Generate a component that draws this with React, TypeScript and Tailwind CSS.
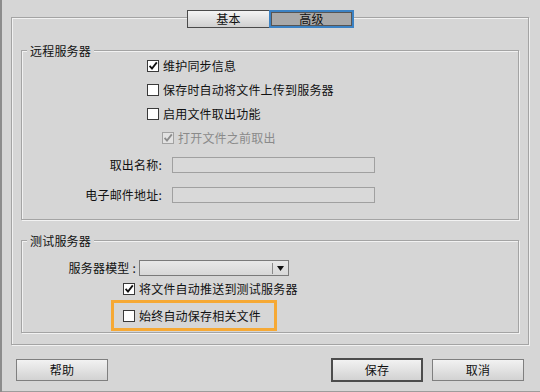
import React from 'react';

type BoxProps = { checked?: boolean; disabled?: boolean };

const Box: React.FC<BoxProps> = ({ checked, disabled }) => (
  <span
    className={
      disabled
        ? 'flex h-[12px] w-[12px] shrink-0 items-center justify-center border border-[#a2a2a2] bg-[#e2e2e2]'
        : 'flex h-[12px] w-[12px] shrink-0 items-center justify-center border border-[#3a3a3a] bg-white'
    }
  >
    {checked && (
      <svg viewBox="0 0 10 10" className="h-[10px] w-[10px]">
        <path
          d="M1.6 4.8 L4 7.6 L8.8 1.4"
          fill="none"
          stroke={disabled ? '#8c8c8c' : '#111'}
          strokeWidth="1.8"
        />
      </svg>
    )}
  </span>
);

type CheckProps = BoxProps & { label: string; className?: string };

const Check: React.FC<CheckProps> = ({ label, checked, disabled, className }) => (
  <div className={`flex items-center gap-[4px] ${className ?? ''}`}>
    <Box checked={checked} disabled={disabled} />
    <span className={disabled ? 'leading-[14px] text-[#8a8a8a]' : 'leading-[14px] text-[#111]'}>{label}</span>
  </div>
);

const Group: React.FC<{ title: string; className: string; children: React.ReactNode }> = ({
  title,
  className,
  children,
}) => (
  <div
    className={`relative border border-[#a4a4a4] shadow-[1px_1px_0_#f2f2f2,inset_1px_1px_0_#f2f2f2] ${className}`}
  >
    <span className="absolute -top-[8px] left-[5px] bg-[#d6d6d6] px-[3px] leading-[16px] text-[#111]">
      {title}
    </span>
    {children}
  </div>
);

const Field: React.FC<{ label: string }> = ({ label }) => (
  <div className="flex items-center">
    <span className="w-[140px] text-right leading-[14px] text-[#111]">{label}</span>
    <div className="ml-[10px] h-[16px] w-[203px] border border-[#a0a0a0] bg-[#d9d9d9]" />
  </div>
);

const Button: React.FC<{ label: string; primary?: boolean }> = ({ label, primary }) => (
  <div
    className={
      primary
        ? 'flex h-[24px] w-[92px] items-center justify-center border-2 border-[#4c4c4c] bg-linear-to-b from-[#f2f2f2] to-[#d2d2d2] text-[#111]'
        : 'flex h-[22px] w-[92px] items-center justify-center border border-[#7f7f7f] bg-linear-to-b from-[#f2f2f2] to-[#d2d2d2] text-[#111]'
    }
  >
    {label}
  </div>
);

export default function App() {
  return (
    <div className="flex h-[392px] w-[540px] flex-col bg-[#d6d6d6] font-['Noto_Sans_CJK_SC',sans-serif] text-[12px] tracking-[0.2px] shadow-[inset_2px_0_0_#8c8c8c,inset_0_-1px_0_#9c9c9c]">
      {/* tabs */}
      <div className="relative z-10 mt-[10px] flex justify-center pl-[1px]">
        <div className="flex h-[18px] w-[83px] items-center justify-center border border-[#4a4a4a] bg-linear-to-b from-[#f4f4f4] to-[#d0d0d0] text-[#111]">
          基本
        </div>
        <div className="-ml-px flex h-[18px] w-[85px] items-center justify-center border-2 border-[#3b82c4] bg-[#a9a9a9] text-[#111] shadow-[inset_0_0_0_1px_#555]">
          高级
        </div>
      </div>

      {/* panel */}
      <div className="-mt-[11px] ml-[11px] flex h-[328px] w-[518px] flex-col border border-[#a4a4a4] px-[9px] pt-[32px] shadow-[1px_1px_0_#f2f2f2,inset_1px_1px_0_#f2f2f2]">
        <Group title="远程服务器" className="h-[170px] pt-[3px]">
          <Check className="ml-[125px] h-[24px]" checked label="维护同步信息" />
          <Check className="ml-[125px] h-[24px]" label="保存时自动将文件上传到服务器" />
          <Check className="ml-[125px] h-[24px]" label="启用文件取出功能" />
          <Check className="ml-[140px] h-[24px]" checked disabled label="打开文件之前取出" />
          <div className="mt-[7px]">
            <Field label="取出名称:" />
          </div>
          <div className="mt-[14px]">
            <Field label="电子邮件地址:" />
          </div>
        </Group>

        <Group title="测试服务器" className="mt-[20px] h-[93px] pt-[19px]">
          <div className="flex items-center">
            <span className="w-[114px] text-right leading-[14px] text-[#111]">服务器模型 :</span>
            <div className="ml-[3px] flex h-[16px] w-[150px] items-center border border-[#7a7a7a] bg-linear-to-b from-[#e8e8e8] to-[#d8d8d8]">
              <div className="flex-1" />
              <div className="h-[11px] w-px bg-[#8a8a8a]" />
              <div className="flex w-[15px] justify-center">
                <svg width="7" height="5" viewBox="0 0 7 5">
                  <path d="M0 0H7L3.5 5Z" fill="#111" />
                </svg>
              </div>
            </div>
          </div>
          <Check className="ml-[101px] mt-[2px] h-[22px]" checked label="将文件自动推送到测试服务器" />
          <div className="ml-[89px] flex h-[31px] w-[166px] items-center border-[3px] border-[#f6a935] pl-[9px]">
            <Check label="始终自动保存相关文件" />
          </div>
        </Group>
      </div>

      {/* buttons */}
      <div className="mt-[13px] flex h-[24px] items-center pl-[16px]">
        <Button label="帮助" />
        <div className="ml-auto flex items-center gap-[9px] pr-[16px]">
          <Button label="保存" primary />
          <Button label="取消" />
        </div>
      </div>
    </div>
  );
}
